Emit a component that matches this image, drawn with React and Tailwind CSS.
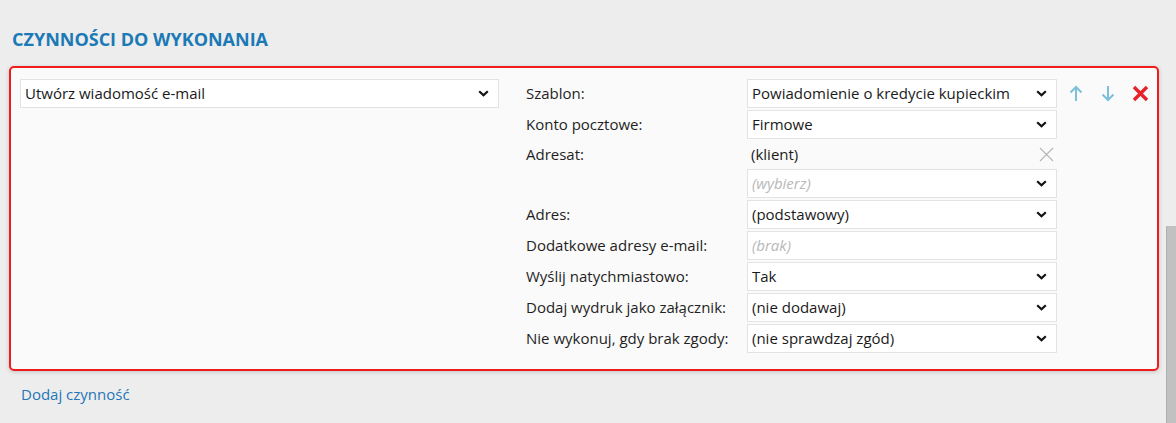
import React from "react";

function Chevron() {
  return (
    <svg width="11" height="7" viewBox="0 0 11 7" className="shrink-0">
      <path d="M1.2 1.2 L5.5 5.3 L9.8 1.2" fill="none" stroke="#111" strokeWidth="2.2" />
    </svg>
  );
}

function Select({ value, placeholder, className = "" }) {
  return (
    <div className={"h-[29px] bg-white border border-[#e3e3e3] flex items-center justify-between pl-[4px] pr-[9px] " + className}>
      {placeholder ? (
        <span className="italic text-[#b8b8b8]">{placeholder}</span>
      ) : (
        <span className="text-[#1a1a1a]">{value}</span>
      )}
      <Chevron />
    </div>
  );
}

function Label({ children }) {
  return <div className="h-[29px] flex items-center text-[#1f1f1f]">{children}</div>;
}

export default function App() {
  return (
    <div className="min-h-[423px] h-[423px] bg-[#ededed] flex font-['Open_Sans',sans-serif] text-[15px] overflow-hidden">
      <div className="flex-1 pl-[9px] pr-[7px]">
        <h2 className="pt-[27px] pl-[3px] text-[18px] font-bold text-[#1b7ab6] leading-[24px]">
          CZYNNOŚCI DO WYKONANIA
        </h2>
        <div className="mt-[15px] border-2 border-[#f01c1c] rounded-[5px] bg-[#fafafa] shadow-[0_1px_4px_rgba(0,0,0,0.18)] pl-[9px] pt-[11px] pb-[16px] flex">
          <Select value="Utwórz wiadomość e-mail" className="w-[479px]" />
          <div className="ml-[27px] grid grid-cols-[221px_310px] gap-y-[2px]">
            <Label>Szablon:</Label>
            <Select value="Powiadomienie o kredycie kupieckim" />
            <Label>Konto pocztowe:</Label>
            <Select value="Firmowe" />
            <div className="h-[26px] flex items-center text-[#1f1f1f]">Adresat:</div>
            <div className="h-[26px] flex items-center justify-between pl-[4px] pr-[3px] text-[#1a1a1a]">
              <span>(klient)</span>
              <svg width="15" height="15" viewBox="0 0 15 15">
                <path d="M1 1 L14 14 M14 1 L1 14" stroke="#b5b5b5" strokeWidth="1.1" fill="none" />
              </svg>
            </div>
            <div />
            <Select placeholder="(wybierz)" />
            <Label>Adres:</Label>
            <Select value="(podstawowy)" />
            <Label>Dodatkowe adresy e-mail:</Label>
            <div className="h-[29px] bg-white border border-[#e3e3e3] flex items-center pl-[4px]">
              <span className="italic text-[#b8b8b8]">(brak)</span>
            </div>
            <Label>Wyślij natychmiastowo:</Label>
            <Select value="Tak" />
            <Label>Dodaj wydruk jako załącznik:</Label>
            <Select value="(nie dodawaj)" />
            <Label>Nie wykonuj, gdy brak zgody:</Label>
            <Select value="(nie sprawdzaj zgód)" />
          </div>
          <div className="ml-[11px] h-[29px] flex items-center">
            <svg width="14" height="17" viewBox="0 0 14 17" className="ml-[1px]">
              <path d="M7 16 L7 2 M1.5 7.5 L7 2 L12.5 7.5" stroke="#7cc0dc" strokeWidth="2" fill="none" />
            </svg>
            <svg width="14" height="17" viewBox="0 0 14 17" className="ml-[18px]">
              <path d="M7 1 L7 15 M1.5 9.5 L7 15 L12.5 9.5" stroke="#7cc0dc" strokeWidth="2" fill="none" />
            </svg>
            <svg width="17" height="17" viewBox="0 0 17 17" className="ml-[17px]">
              <path d="M2 2 L15 15 M15 2 L2 15" stroke="#e5232a" strokeWidth="3.4" fill="none" />
            </svg>
          </div>
        </div>
        <div className="mt-[12px] pl-[12px] text-[#2676b6] text-[15px]">Dodaj czynność</div>
      </div>
      <div className="w-[10px] flex flex-col">
        <div className="h-[226px]" />
        <div className="flex-1 bg-[#c1c1c1] border-l border-[#b0b0b0]" />
      </div>
    </div>
  );
}
